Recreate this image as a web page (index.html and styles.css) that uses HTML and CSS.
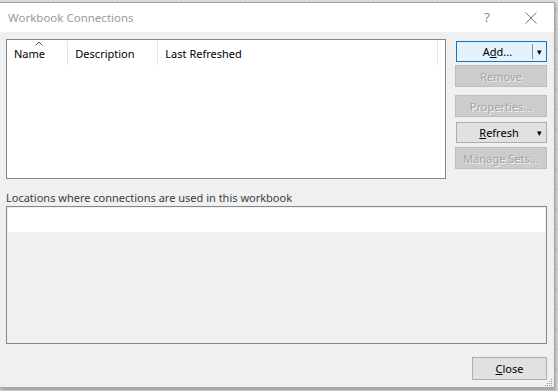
FILE: index.html
```html
<!DOCTYPE html>
<html lang="en">
<head>
  <meta charset="UTF-8">
  <title>Workbook Connections</title>
  <link rel="stylesheet" href="styles.css">
</head>
<body>

  <div class="dialog">
    <!-- title bar -->
    <div class="titlebar">
      <span class="title">Workbook Connections</span>
      <span class="help">?</span>
      <svg class="close-x" width="12" height="12" viewBox="0 0 12 12">
        <path d="M0.5 0.5 L11.5 11.5 M11.5 0.5 L0.5 11.5" stroke="#777" stroke-width="1" fill="none"/>
      </svg>
    </div>

    <div class="content">
      <div class="top">
        <!-- connections list -->
        <div class="listbox">
          <div class="header">
            <div class="col col-name">
              Name
              <svg class="caret" width="8" height="5" viewBox="0 0 8 5">
                <path d="M0.5 4.5 L4 1 L7.5 4.5" stroke="#555" stroke-width="1" fill="none"/>
              </svg>
            </div>
            <div class="col col-desc">Description</div>
            <div class="col col-last">Last Refreshed</div>
            <div class="col col-rest"></div>
          </div>
        </div>

        <div class="buttons">
          <button class="btn split active">
            <span class="label">A<u>d</u>d...</span>
            <span class="divider"></span>
            <span class="arrow">&#9662;</span>
          </button>
          <button class="btn disabled">Remove</button>
          <button class="btn disabled gap">Properties...</button>
          <button class="btn split normal">
            <span class="label"><u>R</u>efresh</span>
            <span class="arrow">&#9662;</span>
          </button>
          <button class="btn disabled">Manage Sets...</button>
        </div>
      </div>

      <div class="locations-label">Locations where connections are used in this workbook</div>
      <div class="locations">
        <div class="loc-row"></div>
      </div>

      <div class="footer">
        <button class="btn normal close-btn"><u>C</u>lose</button>
      </div>
    </div>

    <svg class="grip" width="9" height="9" viewBox="0 0 9 9">
      <rect x="7" y="1" width="1" height="1" fill="#999"/>
      <rect x="5" y="3" width="1" height="1" fill="#999"/>
      <rect x="7" y="3" width="1" height="1" fill="#999"/>
      <rect x="3" y="5" width="1" height="1" fill="#999"/>
      <rect x="5" y="5" width="1" height="1" fill="#999"/>
      <rect x="7" y="5" width="1" height="1" fill="#999"/>
      <rect x="1" y="7" width="1" height="1" fill="#999"/>
      <rect x="3" y="7" width="1" height="1" fill="#999"/>
      <rect x="5" y="7" width="1" height="1" fill="#999"/>
      <rect x="7" y="7" width="1" height="1" fill="#999"/>
    </svg>
  </div>

</body>
</html>
```

FILE: styles.css
```css
html, body {
  margin: 0;
  height: 100%;
}
body {
  font-family: "Noto Sans", "Open Sans", Arial, sans-serif;
  font-size: 11px;
  color: #000;
  overflow: hidden;
  background-color: #dcdcdc;
  background-image:
    linear-gradient(to right, #c4c4c4 1px, transparent 1px),
    linear-gradient(to bottom, #c4c4c4 1px, transparent 1px);
  background-size: 64px 20px, 64px 20px;
  background-position: 53px 0, 0 9px;
}

.dialog {
  position: relative;
  box-sizing: border-box;
  width: 555px;
  height: 386px;
  margin-top: 2px;
  background: #f0f0f0;
  border: 1px solid #a3a3a3;
  border-left: none;
  box-shadow: 1px 2px 3px rgba(0, 0, 0, 0.25);
}

.titlebar {
  display: flex;
  align-items: center;
  height: 29px;
  background: #fff;
  padding-left: 8px;
}
.title {
  color: #9a9a9a;
  font-size: 11.5px;
  flex: 1;
}
.help {
  color: #8a8a8a;
  font-size: 13px;
  margin-right: 35px;
  margin-top: -2px;
}
.close-x {
  margin-right: 17px;
}

.content {
  padding: 7px 7px 0 6px;
}
.top {
  display: flex;
  gap: 9px;
}

.listbox {
  box-sizing: border-box;
  width: 440px;
  height: 140px;
  background: #fff;
  border: 1px solid #828790;
}
.header {
  display: flex;
  height: 25px;
}
.col {
  position: relative;
  display: flex;
  align-items: center;
  box-sizing: border-box;
  height: 24px;
  padding-left: 7px;
  border-right: 1px solid #e5e5e5;
  margin-top: 1px;
}
.col-name {
  width: 62px;
}
.col-desc {
  width: 91px;
}
.col-last {
  width: 283px;
}
.col-rest {
  border-right: none;
  flex: 1;
}
.caret {
  position: absolute;
  left: 28px;
  top: 0;
}

.buttons {
  display: flex;
  flex-direction: column;
  width: 92px;
  padding-top: 2px;
}
.btn {
  box-sizing: border-box;
  font-family: inherit;
  font-size: 11px;
  height: 21px;
  padding: 0;
  margin-bottom: 4px;
  border: 1px solid #adadad;
  background: #e1e1e1;
  color: #000;
}
.btn.disabled {
  height: 22px;
  border-color: #bfbfbf;
  background: #cccccc;
  color: #a3a3a3;
  text-shadow: 1px 1px 0 #f4f4f4;
}
.btn.gap {
  margin-top: 4px;
  margin-bottom: 5px;
}
.btn.active {
  width: 91px;
  margin-left: 1px;
  margin-bottom: 3px;
  background: #e5f1fb;
  border-color: #0078d7;
}
.btn.split.normal {
  width: 91px;
  margin-left: 1px;
}
.split {
  display: flex;
  align-items: center;
}
.split .label {
  flex: 1;
  text-align: center;
  padding-left: 6px;
}
.split .divider {
  width: 1px;
  height: 15px;
  background: #8a8a8a;
  margin-right: 2px;
}
.split .arrow {
  width: 9px;
  font-size: 9px;
  margin-right: 2px;
  text-align: center;
}

.locations-label {
  margin-top: 10px;
  line-height: 17px;
  color: #3c3c3c;
}
.locations {
  box-sizing: border-box;
  height: 138px;
  padding: 1px;
  border: 1px solid #828790;
}
.loc-row {
  height: 24px;
  background: #fff;
}

.footer {
  display: flex;
  justify-content: flex-end;
  margin-top: 13px;
}
.close-btn {
  width: 75px;
  height: 23px;
  margin-bottom: 0;
}

.grip {
  position: absolute;
  right: 1px;
  bottom: 0;
}
```
